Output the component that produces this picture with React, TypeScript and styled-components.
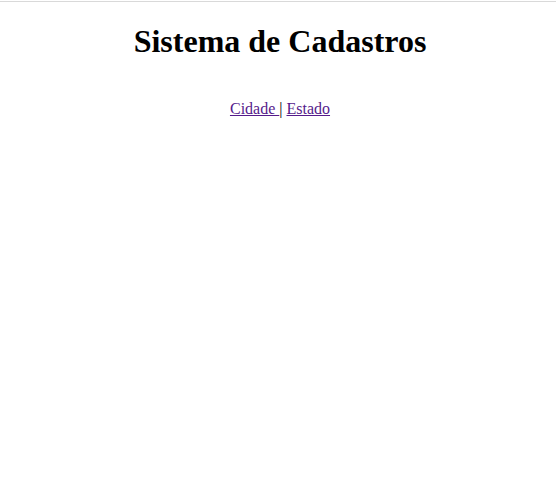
import styled, { createGlobalStyle } from 'styled-components';

const GlobalStyle = createGlobalStyle`
  html, body {
    margin: 0;
    padding: 0;
    background: #ffffff;
  }
  body {
    font-family: "Liberation Serif", "Times New Roman", serif;
    font-size: 16px;
    color: #000000;
  }
`;

const TopLine = styled.div`
  margin-top: 1px;
  height: 1px;
  background-color: #d9d9d9;
`;

const Page = styled.div`
  padding: 0 6px 0 10px;
  text-align: center;
`;

const Title = styled.h1`
  font-size: 32px;
  font-weight: bold;
  margin: 21.44px 0;
`;

const Nav = styled.nav`
  padding-top: 18.4px;
  line-height: normal;
`;

const NavLink = styled.a`
  color: #551a8b;
  text-decoration: underline;
  cursor: pointer;
`;

const Separator = styled.span`
  color: #000000;
`;

const App = () => {
  return (
    <>
      <GlobalStyle />
      <TopLine />
      <Page>
        <Title>Sistema de Cadastros</Title>
        <Nav>
          <NavLink href="#cidade">Cidade </NavLink>
          <Separator>|</Separator> <NavLink href="#estado">Estado</NavLink>
        </Nav>
      </Page>
    </>
  );
};

export default App;
